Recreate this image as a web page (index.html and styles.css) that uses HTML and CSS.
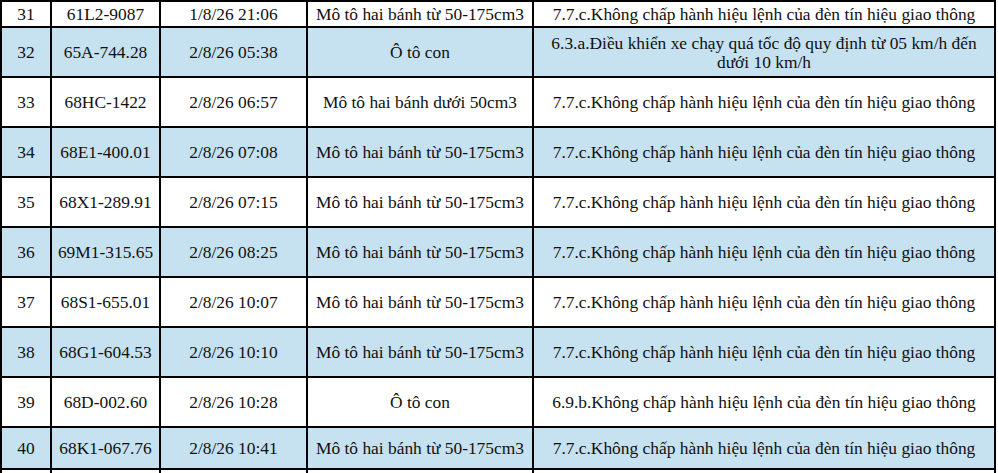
FILE: index.html
```html
<!DOCTYPE html>
<html lang="vi">
<head>
<meta charset="utf-8">
<title>Danh sách vi phạm</title>
<link rel="stylesheet" href="styles.css">
</head>
<body>
<table class="grid">
  <colgroup>
    <col class="c-no"><col class="c-plate"><col class="c-time"><col class="c-type"><col class="c-viol">
  </colgroup>
  <tbody>
    <tr class="r-short"><td>31</td><td>61L2-9087</td><td>1/8/26 21:06</td><td>Mô tô hai bánh từ 50-175cm3</td><td>7.7.c.Không chấp hành hiệu lệnh của đèn tín hiệu giao thông</td></tr>
    <tr class="r alt"><td>32</td><td>65A-744.28</td><td>2/8/26 05:38</td><td>Ô tô con</td><td class="two">6.3.a.Điều khiển xe chạy quá tốc độ quy định từ 05 km/h đến<br>dưới 10 km/h</td></tr>
    <tr class="r"><td>33</td><td>68HC-1422</td><td>2/8/26 06:57</td><td>Mô tô hai bánh dưới 50cm3</td><td>7.7.c.Không chấp hành hiệu lệnh của đèn tín hiệu giao thông</td></tr>
    <tr class="r alt"><td>34</td><td>68E1-400.01</td><td>2/8/26 07:08</td><td>Mô tô hai bánh từ 50-175cm3</td><td>7.7.c.Không chấp hành hiệu lệnh của đèn tín hiệu giao thông</td></tr>
    <tr class="r"><td>35</td><td>68X1-289.91</td><td>2/8/26 07:15</td><td>Mô tô hai bánh từ 50-175cm3</td><td>7.7.c.Không chấp hành hiệu lệnh của đèn tín hiệu giao thông</td></tr>
    <tr class="r alt"><td>36</td><td>69M1-315.65</td><td>2/8/26 08:25</td><td>Mô tô hai bánh từ 50-175cm3</td><td>7.7.c.Không chấp hành hiệu lệnh của đèn tín hiệu giao thông</td></tr>
    <tr class="r"><td>37</td><td>68S1-655.01</td><td>2/8/26 10:07</td><td>Mô tô hai bánh từ 50-175cm3</td><td>7.7.c.Không chấp hành hiệu lệnh của đèn tín hiệu giao thông</td></tr>
    <tr class="r alt"><td>38</td><td>68G1-604.53</td><td>2/8/26 10:10</td><td>Mô tô hai bánh từ 50-175cm3</td><td>7.7.c.Không chấp hành hiệu lệnh của đèn tín hiệu giao thông</td></tr>
    <tr class="r"><td>39</td><td>68D-002.60</td><td>2/8/26 10:28</td><td>Ô tô con</td><td>6.9.b.Không chấp hành hiệu lệnh của đèn tín hiệu giao thông</td></tr>
    <tr class="r-last alt"><td>40</td><td>68K1-067.76</td><td>2/8/26 10:41</td><td>Mô tô hai bánh từ 50-175cm3</td><td>7.7.c.Không chấp hành hiệu lệnh của đèn tín hiệu giao thông</td></tr>
    <tr class="r"><td></td><td></td><td></td><td></td><td></td></tr>
  </tbody>
</table>
</body>
</html>
```
FILE: styles.css
```css
html, body {
  margin: 0;
  padding: 0;
  background: #ffffff;
  overflow: hidden;
}

.grid {
  border-collapse: separate;
  border-spacing: 0;
  table-layout: fixed;
  width: 996px;
  border-left: 2px solid #000;
  border-top: 2px solid #000;
  font-family: "Liberation Serif", "Times New Roman", serif;
  font-size: 17.4px;
  color: #111;
}

.c-no { width: 50px; }
.c-plate { width: 109px; }
.c-time { width: 147px; }
.c-type { width: 226px; }
.c-viol { width: 462px; }

.grid td {
  box-sizing: border-box;
  border-right: 2px solid #000;
  border-bottom: 2px solid #000;
  padding: 0 1px;
  text-align: center;
  vertical-align: middle;
  white-space: nowrap;
  line-height: 19px;
}

.r-short td { height: 26px; }
.r td { height: 50px; }
.r-last td { height: 42px; }

.alt td { background: #c6e1f0; }

.grid td.two { padding-top: 2px; }
```
